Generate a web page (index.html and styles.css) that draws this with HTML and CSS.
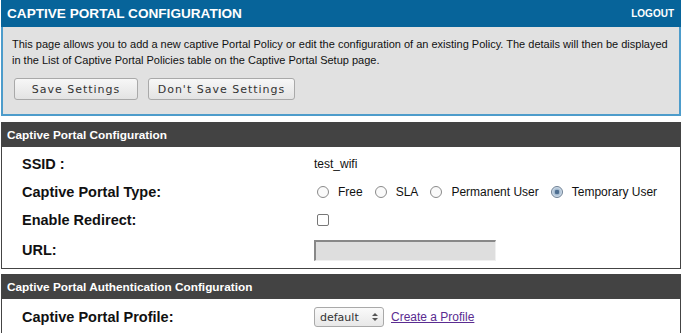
FILE: index.html
```html
<!DOCTYPE html>
<html>
<head>
<meta charset="utf-8">
<link rel="stylesheet" href="styles.css">
</head>
<body>
<div class="page">
  <div class="topbar">
    <span class="title">CAPTIVE PORTAL CONFIGURATION</span>
    <span class="logout">LOGOUT</span>
  </div>
  <div class="intro">
    <p class="desc">This page allows you to add a new captive Portal Policy or edit the configuration of an existing Policy. The details will then be displayed in the List of Captive Portal Policies table on the Captive Portal Setup page.</p>
    <div class="buttons">
      <button class="btn btn-save">Save Settings</button>
      <button class="btn btn-dont">Don't Save Settings</button>
    </div>
  </div>

  <div class="section">
    <div class="sec-head">Captive Portal Configuration</div>
    <div class="sec-body">
      <div class="row">
        <div class="label">SSID :</div>
        <div class="value">test_wifi</div>
      </div>
      <div class="row">
        <div class="label">Captive Portal Type:</div>
        <div class="value radios">
          <span class="radio"></span><span class="rlabel">Free</span>
          <span class="radio"></span><span class="rlabel">SLA</span>
          <span class="radio"></span><span class="rlabel">Permanent User</span>
          <span class="radio checked"></span><span class="rlabel">Temporary User</span>
        </div>
      </div>
      <div class="row">
        <div class="label">Enable Redirect:</div>
        <div class="value"><span class="checkbox"></span></div>
      </div>
      <div class="row row-url">
        <div class="label">URL:</div>
        <div class="value"><span class="textbox"></span></div>
      </div>
    </div>
  </div>

  <div class="section section-auth">
    <div class="sec-head">Captive Portal Authentication Configuration</div>
    <div class="sec-body sec-body-auth">
      <div class="row">
        <div class="label">Captive Portal Profile:</div>
        <div class="value">
          <span class="select">default<svg class="arrows" width="8" height="12" viewBox="0 0 8 12"><path d="M1 5 L4 2 L7 5 Z" fill="#555"/><path d="M1 7 L4 10 L7 7 Z" fill="#555"/></svg></span>
          <a class="link" href="#">Create a Profile</a>
        </div>
      </div>
    </div>
  </div>
</div>
</body>
</html>
```
FILE: styles.css
```css
html, body {
  margin: 0;
  padding: 0;
  background: #ffffff;
}
body {
  font-family: "Liberation Sans", Arial, sans-serif;
  color: #111;
}
.page {
  margin-left: 1px;
  width: 680px;
}
.topbar {
  height: 27px;
  background: #07649a;
  color: #fff;
  font-weight: bold;
  font-size: 13.6px;
  display: flex;
  justify-content: space-between;
  align-items: center;
  padding: 0 7px 0 6px;
}
.logout {
  font-size: 10px;
}
.intro {
  background: #e1e1e1;
  border: 2px solid #4d9ccb;
  border-top: none;
  height: 89px;
  box-sizing: border-box;
  padding: 9px 2px 0 9px;
}
.desc {
  margin: 0;
  font-size: 11px;
  line-height: 16px;
  color: #111;
}
.buttons {
  display: flex;
  gap: 10px;
  margin-top: 10px;
  padding-left: 2px;
}
.btn {
  height: 22px;
  border: 1px solid #a9a9a9;
  border-radius: 3px;
  background: linear-gradient(#f7f7f7, #e3e3e3);
  font-family: "DejaVu Sans", sans-serif;
  font-size: 11px;
  letter-spacing: 1px;
  color: #333;
  padding: 0;
}
.btn-save { width: 124px; }
.btn-dont { width: 147px; }
.section {
  margin-top: 6px;
}
.section-auth {
  margin-top: 5px;
}
.sec-head {
  height: 25px;
  background: #434343;
  color: #fff;
  font-weight: bold;
  font-size: 11.8px;
  display: flex;
  align-items: center;
  padding-left: 6px;
}
.sec-body {
  border: 1px solid #444;
  border-top: none;
  padding: 3px 0 2px 0;
}
.sec-body-auth {
  padding-top: 4px;
}
.row {
  display: flex;
  align-items: center;
  height: 28px;
  font-size: 12px;
}
.row-url { height: 32px; }
.label {
  width: 292px;
  padding-left: 20px;
  font-weight: bold;
  font-size: 14.5px;
}
.value {
  display: flex;
  align-items: center;
}
.radio {
  width: 12px;
  height: 12px;
  border: 1px solid #8a8a8a;
  border-radius: 50%;
  background: #fafafa;
  margin: 0 9px 0 3px;
  box-sizing: border-box;
}
.radio.checked {
  border-color: #6d7f93;
  background: radial-gradient(circle, #4e6e90 0 2px, #9fb6cc 2.5px, #d6e2ee 5px);
}
.rlabel { margin-right: 9px; }
.checkbox {
  width: 12px;
  height: 12px;
  border: 1px solid #777;
  border-radius: 2px;
  background: #fff;
  box-sizing: border-box;
  margin-left: 3px;
}
.textbox {
  display: block;
  width: 182px;
  height: 21px;
  box-sizing: border-box;
  background: #dedede;
  border-top: 2px solid #888;
  border-left: 2px solid #888;
  border-right: 1px solid #f0f0f0;
  border-bottom: 1px solid #f0f0f0;
}
.select {
  display: inline-flex;
  align-items: center;
  justify-content: space-between;
  width: 70px;
  height: 20px;
  box-sizing: border-box;
  border: 1px solid #a9a9a9;
  border-radius: 3px;
  background: linear-gradient(#fafafa, #e8e8e8);
  font-family: "DejaVu Sans", sans-serif;
  font-size: 11px;
  color: #333;
  padding: 0 4px 0 5px;
  margin-right: 7px;
}
.link {
  color: #5a2c91;
  text-decoration: underline;
}
```
